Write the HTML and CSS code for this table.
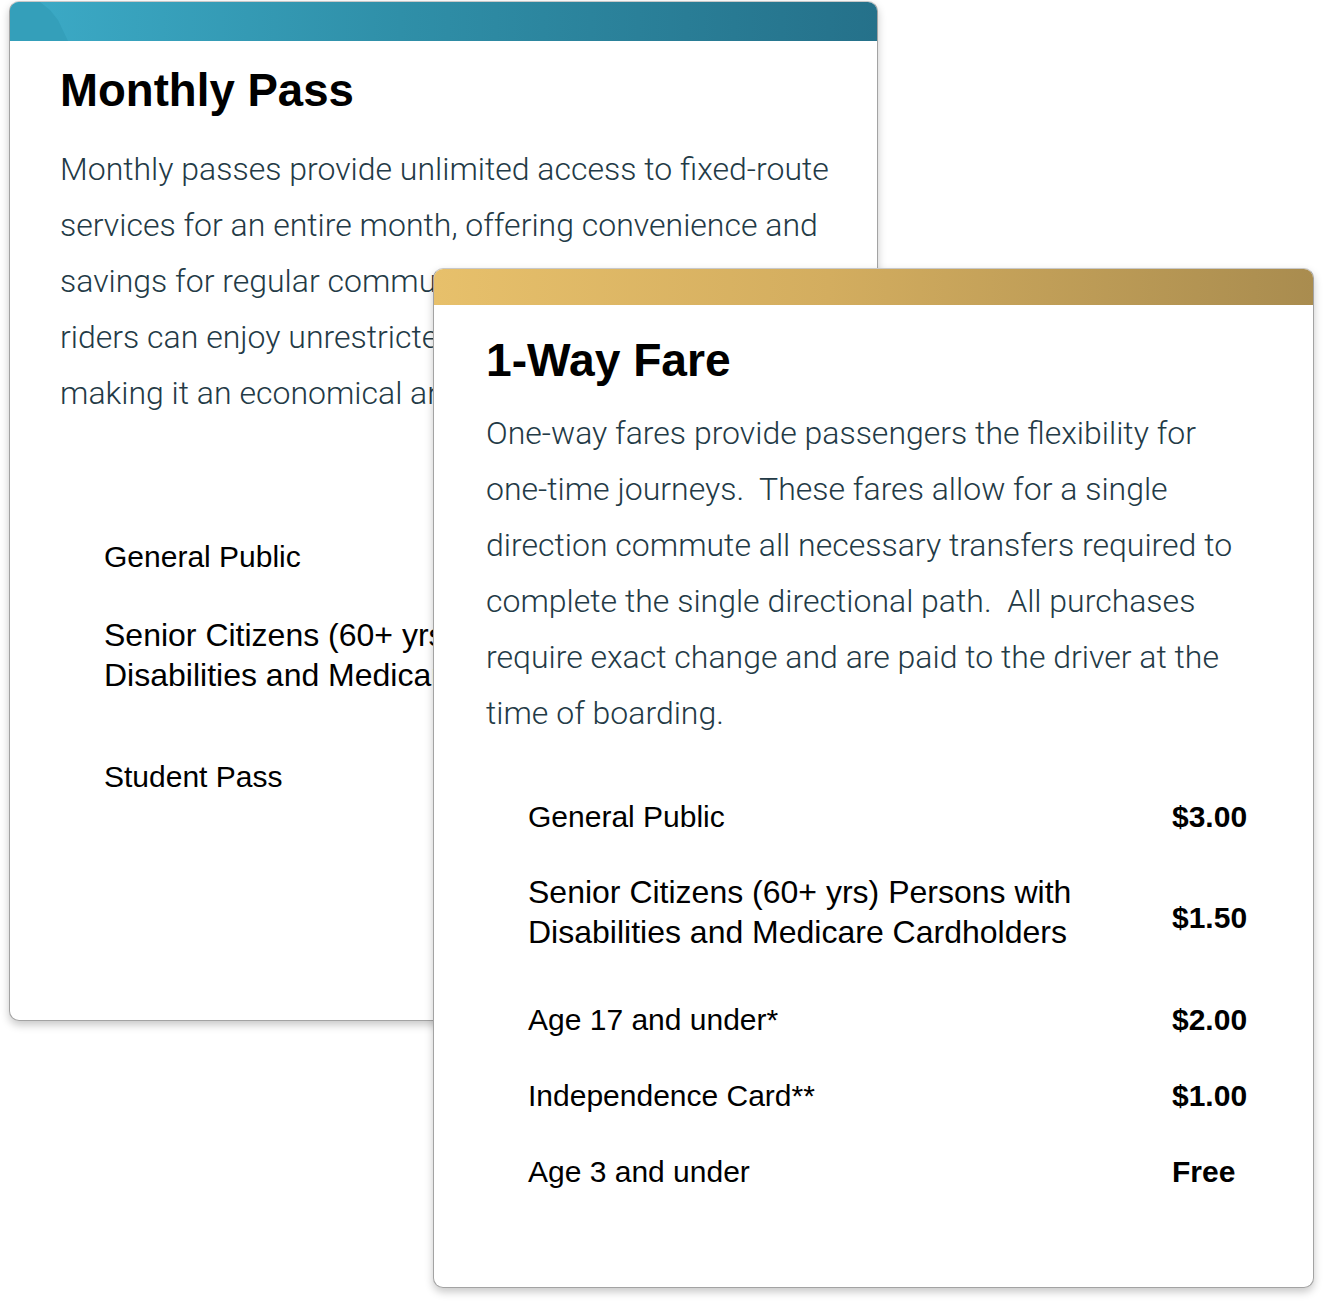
FILE: index.html
```html
<!DOCTYPE html>
<html lang="en">
<head>
<meta charset="utf-8">
<title>Fares</title>
<link rel="stylesheet" href="styles.css">
</head>
<body>
<div class="stage">
  <section class="card card-monthly">
    <div class="bar bar-teal"></div>
    <div class="card-body">
      <h2 class="title">Monthly Pass</h2>
      <p class="desc">Monthly passes provide unlimited access to fixed-route services for an entire month, offering convenience and savings for regular commuters. With a monthly pass,<br>riders can enjoy unrestricted travel on all routes,<br>making it an economical and hassle-free choice.</p>
      <div class="fares fares-monthly">
        <div class="row r1"><span class="label">General Public</span><span class="price">$60.00</span></div>
        <div class="row r2"><span class="label">Senior Citizens (60+ yrs) Persons with Disabilities and Medicare Cardholders</span><span class="price">$30.00</span></div>
        <div class="row r3"><span class="label">Student Pass</span><span class="price">$40.00</span></div>
      </div>
    </div>
  </section>

  <section class="card card-oneway">
    <div class="bar bar-gold"></div>
    <div class="card-body">
      <h2 class="title">1-Way Fare</h2>
      <p class="desc">One-way fares provide passengers the flexibility for one-time journeys.&nbsp; These fares allow for a single direction commute all necessary transfers required to complete the single directional path.&nbsp; All purchases require exact change and are paid to the driver at the time of boarding.</p>
      <div class="fares fares-oneway">
        <div class="row r1"><span class="label">General Public</span><span class="price">$3.00</span></div>
        <div class="row r2"><span class="label">Senior Citizens (60+ yrs) Persons with Disabilities and Medicare Cardholders</span><span class="price">$1.50</span></div>
        <div class="row"><span class="label">Age 17 and under*</span><span class="price">$2.00</span></div>
        <div class="row"><span class="label">Independence Card**</span><span class="price">$1.00</span></div>
        <div class="row"><span class="label">Age 3 and under</span><span class="price">Free</span></div>
      </div>
    </div>
  </section>
</div>
</body>
</html>
```

FILE: styles.css
```css
* { box-sizing: border-box; }

html, body {
  margin: 0;
  padding: 0;
  background: #ffffff;
}

body {
  width: 1324px;
  height: 1304px;
  overflow: hidden;
  font-family: "Liberation Sans", Arial, sans-serif;
}

.stage {
  position: relative;
  padding: 1px 0 0 9px;
}

.card {
  background: #ffffff;
  border: 1px solid #a3a3a3;
  border-top-color: #c8c8c8;
  border-radius: 10px;
  box-shadow: 0 4px 8px rgba(0, 0, 0, 0.22);
  overflow: hidden;
  display: flex;
  flex-direction: column;
}

.card-monthly {
  width: 869px;
  height: 1020px;
}

.card-oneway {
  position: absolute;
  left: 433px;
  top: 268px;
  width: 881px;
  height: 1020px;
}

.bar {
  flex: none;
  position: relative;
}

.bar-teal {
  height: 39px;
  background: linear-gradient(90deg, #3cabc7 0%, #2f8fa8 45%, #25718a 100%);
}

.bar-teal::before {
  content: "";
  position: absolute;
  left: 0;
  top: 0;
  width: 60px;
  height: 39px;
  background: #349fba;
  clip-path: polygon(0 0, 30px 0, 40px 8px, 48px 18px, 58px 39px, 0 39px);
}

.bar-gold {
  height: 36px;
  background: linear-gradient(90deg, #e7c06b 0%, #d3ad5f 45%, #a98c4f 100%);
}

.card-body {
  flex: 1;
}

.card-monthly .card-body {
  padding: 20px 40px 0 50px;
}

.card-oneway .card-body {
  padding: 25px 40px 0 52px;
}

.title {
  margin: 0;
  font-family: "Liberation Sans", Arial, sans-serif;
  font-weight: 700;
  font-size: 45.6px;
  line-height: 60px;
  color: #000000;
}

.card-oneway .title {
  font-size: 46.2px;
}

.desc {
  margin: 20px 0 0 0;
  font-family: Roboto, "Noto Sans", sans-serif;
  font-weight: 300;
  font-size: 32px;
  line-height: 56px;
  color: #233a46;
}

.card-monthly .desc {
  width: 776px;
}

.card-oneway .desc {
  margin-top: 15px;
  width: 760px;
}

.fares {
  display: flex;
  flex-direction: column;
}

.fares-monthly {
  margin: 98px 0 0 44px;
}

.fares-oneway {
  margin: 38px 0 0 42px;
}

.row {
  display: flex;
  align-items: center;
  padding: 18px 0;
  font-size: 30px;
  line-height: 40px;
  color: #000000;
}

.fares-oneway .row.r1 {
  padding-bottom: 17px;
}

.row.r2 {
  padding-bottom: 30px;
}

.row.r2 .label {
  font-size: 32px;
}

.row.r2 .price {
  padding-top: 12px;
}

.label {
  flex: none;
  width: 644px;
}

.price {
  font-weight: 700;
}

.fares-monthly .label {
  width: 600px;
}

.fares-monthly .row.r2 {
  padding-top: 20px;
  padding-bottom: 44px;
}
```
